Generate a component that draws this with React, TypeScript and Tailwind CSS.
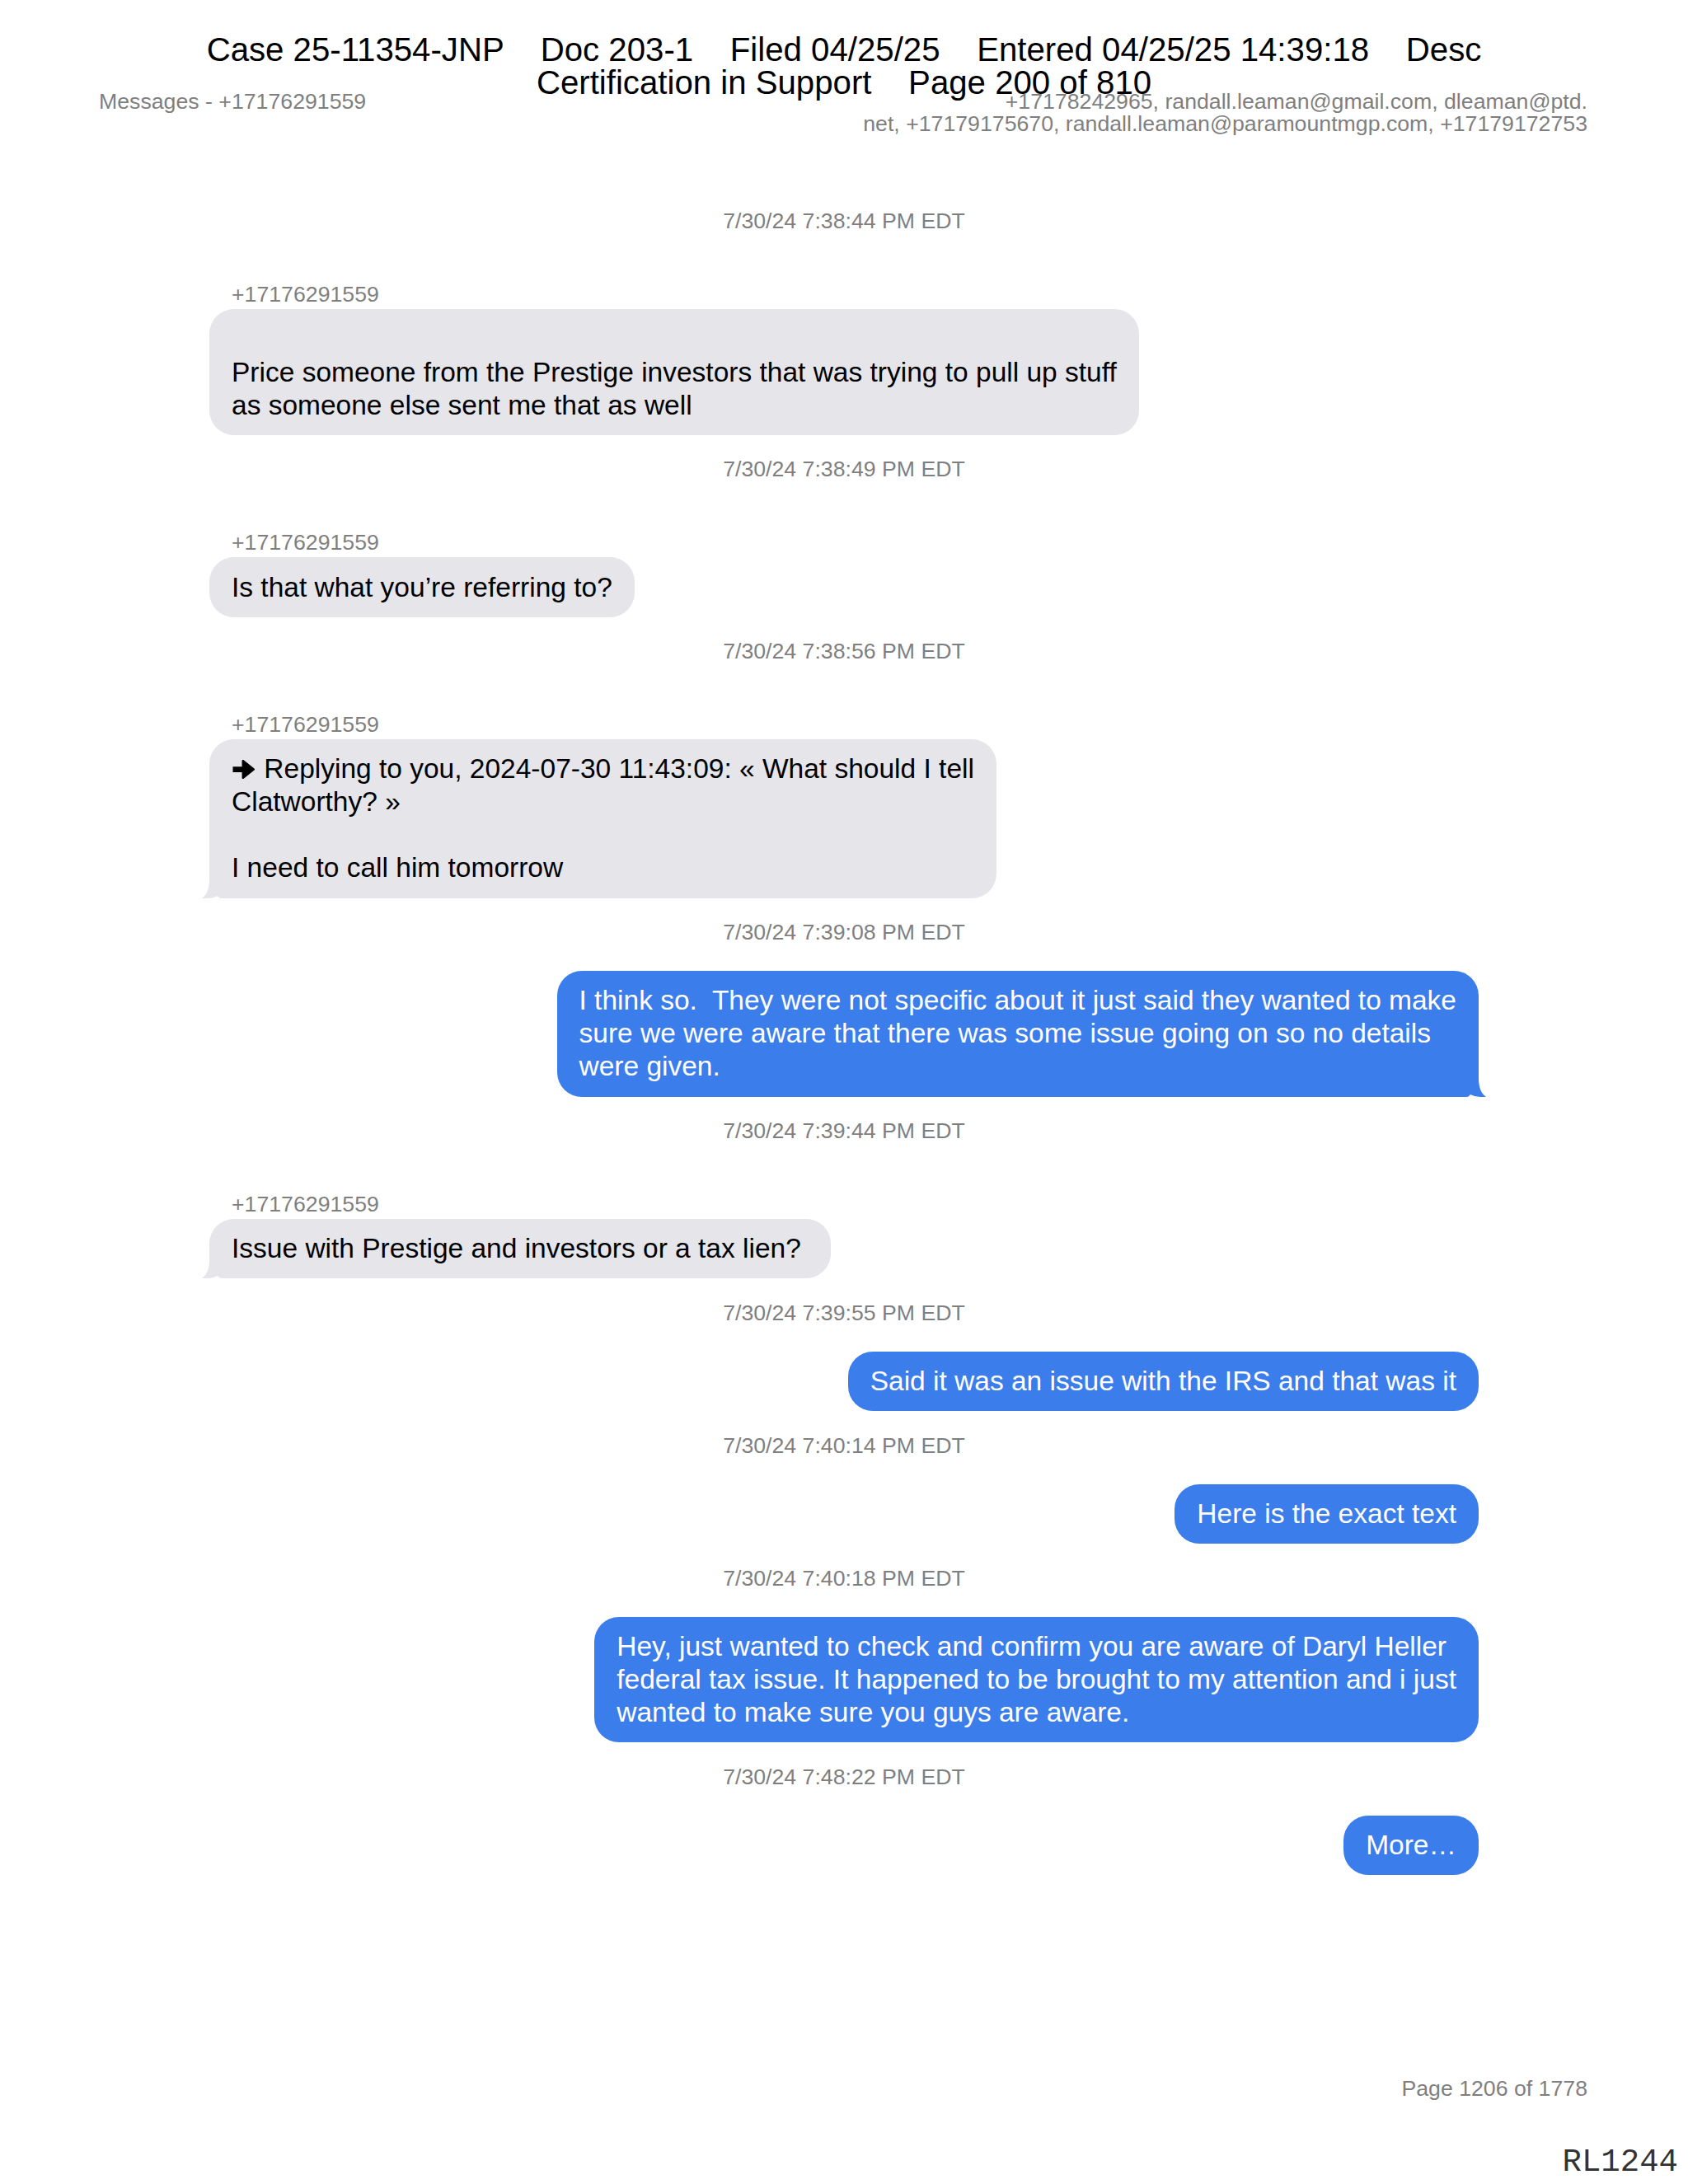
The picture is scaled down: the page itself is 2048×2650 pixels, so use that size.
import type { ReactNode } from 'react'

type Message = {
  time: string
  from?: string
  text: ReactNode
  outgoing?: boolean
  tail?: boolean
}

const SENDER = '+17176291559'

function ReplyArrow() {
  return (
    <svg viewBox="0 0 30 28" className="mr-[1px] inline-block h-[27px] w-[29px] align-[-3px]">
      <path d="M1.5 10.5h11.5V3.5c0-1.2 1.3-1.8 2.2-1.1l13.3 10.5c.8.6.8 1.6 0 2.2L15.2 25.6c-.9.7-2.2.1-2.2-1.1v-7H1.5z" fill="#000" />
    </svg>
  )
}

const messages: Message[] = [
  {
    time: '7/30/24 7:38:44 PM EDT',
    from: SENDER,
    text: '\nPrice someone from the Prestige investors that was trying to pull up stuff\nas someone else sent me that as well',
  },
  {
    time: '7/30/24 7:38:49 PM EDT',
    from: SENDER,
    text: 'Is that what you’re referring to?',
  },
  {
    time: '7/30/24 7:38:56 PM EDT',
    from: SENDER,
    tail: true,
    text: (
      <>
        <ReplyArrow />
        {' Replying to you, 2024-07-30 11:43:09: « What should I tell\nClatworthy? »\n\nI need to call him tomorrow'}
      </>
    ),
  },
  {
    time: '7/30/24 7:39:08 PM EDT',
    outgoing: true,
    tail: true,
    text: 'I think so.  They were not specific about it just said they wanted to make\nsure we were aware that there was some issue going on so no details\nwere given.',
  },
  {
    time: '7/30/24 7:39:44 PM EDT',
    from: SENDER,
    tail: true,
    text: 'Issue with Prestige and investors or a tax lien?\u00a0',
  },
  {
    time: '7/30/24 7:39:55 PM EDT',
    outgoing: true,
    text: 'Said it was an issue with the IRS and that was it',
  },
  {
    time: '7/30/24 7:40:14 PM EDT',
    outgoing: true,
    text: 'Here is the exact text',
  },
  {
    time: '7/30/24 7:40:18 PM EDT',
    outgoing: true,
    text: 'Hey, just wanted to check and confirm you are aware of Daryl Heller\nfederal tax issue. It happened to be brought to my attention and i just\nwanted to make sure you guys are aware.',
  },
  {
    time: '7/30/24 7:48:22 PM EDT',
    outgoing: true,
    text: 'More…',
  },
]

function Tail({ outgoing }: { outgoing?: boolean }) {
  if (outgoing) {
    return (
      <svg viewBox="0 0 40 30" className="absolute bottom-0 right-[-9px] h-[30px] w-[40px]">
        <path d="M31 0H0v30h16c3 0 4-2 5-3 4 2.5 12 3.5 19 3-6-4-9-12-9-22z" fill="#3b7deb" />
      </svg>
    )
  }
  return (
    <svg viewBox="0 0 40 30" className="absolute bottom-0 left-[-9px] h-[30px] w-[40px]">
      <path d="M9 0h31v30H24c-3 0-4-2-5-3-4 2.5-12 3.5-19 3 6-4 9-12 9-22z" fill="#e5e5ea" />
    </svg>
  )
}

function MessageBlock({ message }: { message: Message }) {
  const { time, from, text, outgoing, tail } = message

  return (
    <div>
      <p className="mt-[25.4px] text-center text-[26.7px] leading-[32px] text-[#7f7f7f]">{time}</p>

      {from ? (
        <p className="mt-[57px] pl-[27px] text-[26.7px] leading-[32px] text-[#7f7f7f]">{from}</p>
      ) : null}

      <div className={['flex', outgoing ? 'mt-[31px] justify-end' : 'mt-[2px] justify-start'].join(' ')}>
        <div
          className={[
            'relative max-w-[1170px] whitespace-pre-wrap rounded-[30px] px-[27px] py-[16.25px] text-[33.5px] leading-[40px]',
            outgoing ? 'bg-[#3b7deb] text-white' : 'bg-[#e5e5ea] text-black',
          ].join(' ')}
        >
          {tail ? <Tail outgoing={outgoing} /> : null}
          <span className="relative">{text}</span>
        </div>
      </div>
    </div>
  )
}

export default function App() {
  return (
    <div className="relative flex h-[2650px] w-[2048px] flex-col bg-white font-['Liberation_Sans',Arial,sans-serif]">
      {/* court filing stamp printed over the page */}
      <div className="absolute left-0 right-0 top-[41px] whitespace-pre text-center text-[40.2px] leading-[40px] text-black">
        <p>Case 25-11354-JNP    Doc 203-1    Filed 04/25/25    Entered 04/25/25 14:39:18    Desc</p>
        <p>Certification in Support    Page 200 of 810</p>
      </div>

      <header className="mt-[110px] flex items-start justify-between pl-[120px] pr-[122px] text-[26.7px] leading-[27px] text-[#7f7f7f]">
        <p>Messages - +17176291559</p>
        <p className="text-right">
          +17178242965, randall.leaman@gmail.com, dleaman@ptd.
          <br />
          net, +17179175670, randall.leaman@paramountmgp.com, +17179172753
        </p>
      </header>

      <main className="mx-auto mt-[63px] w-[1540px]">
        {messages.map((message) => (
          <MessageBlock key={message.time} message={message} />
        ))}
      </main>

      <footer className="mt-auto flex flex-col items-end pb-[6px]">
        <p className="pr-[122px] text-[26.7px] leading-[32px] text-[#7f7f7f]">Page 1206 of 1778</p>
        <p className="mt-[54px] pr-[12px] font-['Liberation_Mono',monospace] text-[39px] leading-[40px] text-[#333]">
          RL1244
        </p>
      </footer>
    </div>
  )
}
